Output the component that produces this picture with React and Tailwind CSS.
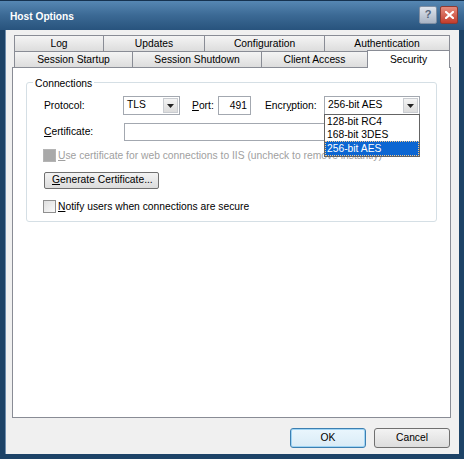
import React from "react";

const font = "font-['Liberation_Sans',Arial,sans-serif]";

function Caret() {
  return (
    <svg width="7" height="4" viewBox="0 0 7 4" className="block">
      <path d="M0 0h7L3.5 4z" fill="#222" />
    </svg>
  );
}

function Select({ value, width }) {
  return (
    <div
      className={`flex h-[19px] items-center border border-[#a3a8b0] bg-white ${width}`}
    >
      <span className="flex-1 pl-[3px] leading-none">{value}</span>
      <div className="m-px flex h-[15px] w-[15px] items-center justify-center border border-[#c9ccd1] bg-gradient-to-b from-[#f4f4f4] to-[#dcdcdc]">
        <Caret />
      </div>
    </div>
  );
}

function Tab({ label, w, last }) {
  return (
    <div
      className={`flex h-[17px] items-center justify-center border border-[#898c95] bg-gradient-to-b from-[#f4f4f4] to-[#dddddd] pt-[2px] leading-none ${w} ${last ? "" : "-mr-px"}`}
    >
      {label}
    </div>
  );
}

function Checkbox({ disabled }) {
  return disabled ? (
    <div className="h-[13px] w-[13px] border border-[#b4b4b4] bg-[#a9a9a9]" />
  ) : (
    <div className="h-[13px] w-[13px] border border-[#8f8f8f] bg-gradient-to-br from-[#dedede] to-[#fafafa]" />
  );
}

export default function App() {
  return (
    <div
      className={`flex h-[459px] w-[464px] flex-col overflow-hidden bg-[#1d4367] text-[10.3px] text-black ${font}`}
    >
      {/* title bar */}
      <div className="flex h-[30px] items-center justify-between border-t border-[#16324f] bg-gradient-to-b from-[#5687b3] via-[#3b6994] to-[#28537d] pl-[10px] pr-[6px]">
        <span className="pt-[2px] text-[10.2px] font-bold text-white">Host Options</span>
        <div className="flex gap-[3px] pb-[2px]">
          <div className="flex h-[18px] w-[18px] items-center justify-center rounded-[2px] border border-[#7e8ea3] bg-gradient-to-b from-[#dfe4ec] to-[#a9b4c4] text-[11px] font-bold leading-none text-[#55657b]">
            ?
          </div>
          <div className="flex h-[18px] w-[18px] items-center justify-center rounded-[2px] border border-[#8e3a32] bg-gradient-to-b from-[#e58a7c] to-[#c23b2b]">
            <svg width="9" height="8" viewBox="0 0 9 8">
              <path d="M1 1l7 6M8 1L1 7" stroke="#fff" strokeWidth="2.2" strokeLinecap="square" />
            </svg>
          </div>
        </div>
      </div>

      {/* client area */}
      <div className="mx-[5px] mb-[5px] flex flex-1 flex-col border-l border-[#6f8eae] bg-[#f0f0f0] pl-[6px] pr-[8px] pt-[5px]">
        {/* tab strip */}
        <div className="ml-[2px] w-[436px]">
          <div className="flex">
            <Tab label="Log" w="w-[90px]" />
            <Tab label="Updates" w="w-[102px]" />
            <Tab label="Configuration" w="w-[121px]" />
            <Tab label="Authentication" w="w-[126px]" last />
          </div>
          <div className="relative z-10 -mb-px -mt-px flex items-end">
            <Tab label="Session Startup" w="w-[119px]" />
            <Tab label="Session Shutdown" w="w-[130px]" />
            <Tab label="Client Access" w="w-[107px]" />
            <div className="-mt-px flex h-[18px] w-[83px] items-center justify-center border border-b-0 border-[#898c95] bg-white pt-[1px] leading-none">
              Security
            </div>
          </div>
        </div>

        {/* tab page */}
        <div className="h-[351px] w-[439px] border border-[#898c95] bg-white px-[13px] pt-[14px]">
          <div className="relative h-[140px] rounded-[3px] border border-[#d5dfe5] pl-[17px] pt-[13px]">
            <span className="absolute -top-[4px] left-[6px] bg-white px-[2px] leading-none">
              Connections
            </span>

            {/* protocol / port / encryption */}
            <div className="flex h-[19px] items-center">
              <span className="w-[79px]">Protocol:</span>
              <Select value="TLS" width="w-[57px]" />
              <span className="ml-[12px] w-[26px]">
                <u>P</u>ort:
              </span>
              <div className="flex h-[19px] w-[33px] items-center justify-end border border-[#a3a8b0] bg-white pr-[3px]">
                491
              </div>
              <span className="ml-[14px] w-[59px]">
                Encr<u>y</u>ption:
              </span>
              <div className="relative">
                <Select value="256-bit AES" width="w-[96px]" />
                <div className="absolute left-0 top-[18px] z-20 w-[96px] border border-[#646464] bg-white leading-[13px]">
                  <div className="pl-[2px]">128-bit RC4</div>
                  <div className="pl-[2px]">168-bit 3DES</div>
                  <div className="border border-dotted border-[#f5c88a] bg-[#0c66d2] pl-[1px] text-white">
                    256-bit AES
                  </div>
                </div>
              </div>
            </div>

            {/* certificate */}
            <div className="mt-[8px] flex h-[18px] items-center">
              <span className="w-[80px]">
                <u>C</u>ertificate:
              </span>
              <div className="h-[18px] w-[296px] border border-[#a3a8b0] bg-white" />
            </div>

            {/* disabled option */}
            <div className="-ml-px mt-[8px] flex h-[13px] items-center gap-[2px] text-[#a0a0a0]">
              <Checkbox disabled />
              <span>
                <u>U</u>se certificate for web connections to IIS (uncheck to remove instantly)
              </span>
            </div>

            <button className="mt-[10px] flex h-[17px] w-[115px] items-center rounded-[2px] border border-[#707070] bg-gradient-to-b from-[#f3f3f3] to-[#dcdcdc] pl-[7px] leading-none">
              <span>
                <u>G</u>enerate Certificate...
              </span>
            </button>

            <div className="-ml-px mt-[11px] flex h-[13px] items-center gap-[2px]">
              <Checkbox />
              <span>
                <u>N</u>otify users when connections are secure
              </span>
            </div>
          </div>
        </div>

        {/* dialog buttons */}
        <div className="mt-[10px] flex justify-end gap-[8px] pr-[1px]">
          <button className="flex h-[20px] w-[76px] items-center justify-center rounded-[3px] border border-[#3c7fb1] bg-gradient-to-b from-[#eaf6fd] to-[#d9ebf6] leading-none shadow-[inset_0_0_0_1px_#9fd4f4]">
            OK
          </button>
          <button className="flex h-[20px] w-[76px] items-center justify-center rounded-[3px] border border-[#707070] bg-gradient-to-b from-[#f3f3f3] to-[#dddddd] leading-none">
            Cancel
          </button>
        </div>
      </div>
    </div>
  );
}
